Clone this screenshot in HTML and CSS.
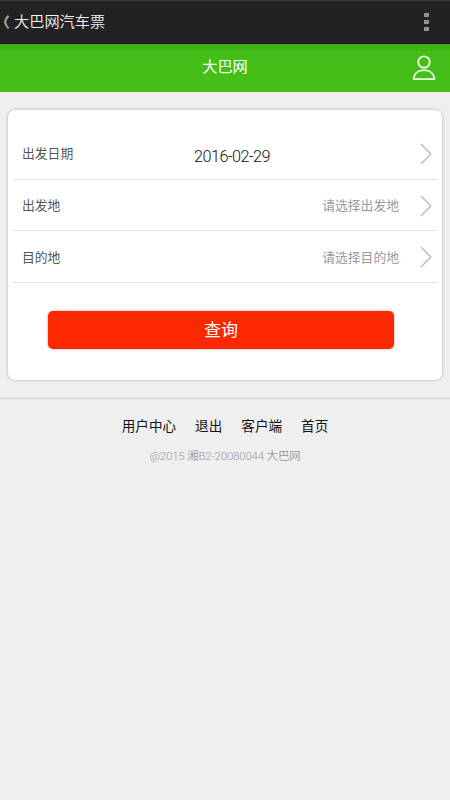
FILE: index.html
```html
<!DOCTYPE html>
<html lang="zh-CN">
<head>
<meta charset="utf-8">
<title>大巴网汽车票</title>
<link rel="stylesheet" href="styles.css">
</head>
<body>
<header class="appbar">
  <svg class="back" width="7" height="14" viewBox="0 0 7 14"><path d="M5.600.8Q2.200 4.200 2.200 7t3.400 6.200" fill="none" stroke="#a3a3a3" stroke-width="2"/></svg>
  <span class="app-title">大巴网汽车票</span>
  <span class="more"><i></i><i></i><i></i></span>
</header>
<div class="titlebar">
  <h1>大巴网</h1>
  <svg class="user" width="24" height="26" viewBox="0 0 24 26"><g fill="none" stroke="#f4ffe9" stroke-width="1.800"><circle cx="12" cy="7" r="5.700"/><path d="M1.800 24.200C2 18.500 6 15.200 12 15.200s10 3.300 10.200 9z"/></g></svg>
</div>
<main class="card">
  <div class="row">
    <span class="label">出发日期</span><span class="date">2016-02-29</span>
    <svg class="arrow" width="12" height="22" viewBox="0 0 12 22"><path d="m1 1 9.800 10L1 21" fill="none" stroke="#bcbcbc" stroke-width="1.500"/></svg>
  </div>
  <div class="row">
    <span class="label">出发地</span><span class="hint">请选择出发地</span>
    <svg class="arrow" width="12" height="22" viewBox="0 0 12 22"><path d="m1 1 9.800 10L1 21" fill="none" stroke="#bcbcbc" stroke-width="1.500"/></svg>
  </div>
  <div class="row">
    <span class="label">目的地</span><span class="hint">请选择目的地</span>
    <svg class="arrow" width="12" height="22" viewBox="0 0 12 22"><path d="m1 1 9.800 10L1 21" fill="none" stroke="#bcbcbc" stroke-width="1.500"/></svg>
  </div>
  <button class="search">查询</button>
</main>
<footer class="footer">
  <nav class="links"><a>用户中心</a><a>退出</a><a>客户端</a><a>首页</a></nav>
  <p class="copy">@2015 湘B2-20080044 大巴网</p>
</footer>
</body>
</html>
```

FILE: styles.css
```css
* { box-sizing: border-box; }
body {
  margin: 0;
  min-height: 800px;
  background: #efefef;
  font-family: Roboto, "Noto Sans CJK SC", sans-serif;
  font-weight: 350;
}
.appbar {
  height: 44px;
  padding: 0 21px 0 3px;
  display: flex;
  align-items: center;
  background: #222;
  border-top: 1px solid #3c3c3c;
  border-bottom: 1px solid #1a1a1a;
  color: #f2f2f2;
}
.app-title { margin-left: 4px; font-size: 15.2px; line-height: 22px; }
.more { margin-left: auto; display: grid; gap: 3px; }
.more i { width: 5px; height: 4px; background: #929292; }
.titlebar {
  height: 48px;
  position: relative;
  display: flex;
  align-items: center;
  justify-content: center;
  background: linear-gradient(#3eaa18, #43bf17 9px);
}
.titlebar h1 {
  margin: 0 0 2px;
  font-size: 15.2px;
  font-weight: 400;
  line-height: 22px;
  color: #fff;
}
.user { position: absolute; right: 14px; top: 11px; }
.card {
  margin: 18px 8px 0;
  height: 270px;
  padding: 18px 5px 0;
  background: #fff;
  border-radius: 7px;
  box-shadow: 0 0 3px rgba(0, 0, 0, .3);
}
.row {
  height: 51.700px;
  padding: 0 5px 0 9px;
  display: grid;
  grid-template-columns: 80px 1fr 33px;
  align-items: center;
  border-bottom: 1px solid #e1e1e1;
}
.label, .hint { padding-bottom: 1px; font-size: 12.8px; font-weight: 400; }
.label { color: #555; }
.date {
  padding: 7px 0 0 92px;
  font-size: 16.3px;
  letter-spacing: -.55px;
  color: #111;
}
.hint { padding-right: 0; color: #999; text-align: right; }
.arrow { justify-self: end; margin-top: 1px; }
.search {
  display: block;
  width: 346px;
  height: 38px;
  margin: 28px 0 0 35px;
  padding: 0 0 3px;
  border: 0;
  border-radius: 5px;
  background: #fc2802;
  box-shadow: 0 0 3px rgba(60, 0, 0, .35);
  color: #fff;
  font: inherit;
  font-size: 17px;
  font-weight: 400;
}
.footer { margin-top: 18px; border-top: 1px solid #cecece; text-align: center; }
.links {
  margin-top: 17px;
  display: flex;
  justify-content: center;
  gap: 19px;
  font-size: 13.6px;
  font-weight: 400;
  line-height: 20px;
  color: #111;
}
.copy { margin: 12px 0 0; font-size: 11.5px; letter-spacing: -.2px; line-height: 17px; color: #999; }
```
